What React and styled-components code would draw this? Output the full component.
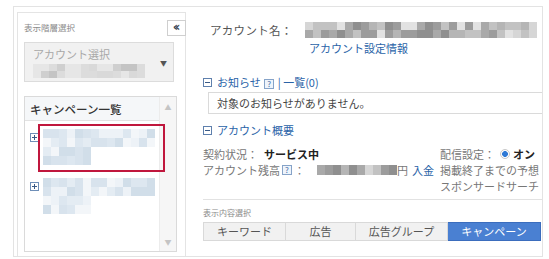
import styled, { createGlobalStyle } from "styled-components";

const GlobalStyle = createGlobalStyle`
  html, body {
    margin: 0;
    padding: 0;
    background: #fff;
  }
  body {
    font-family: "Noto Sans CJK JP", "Noto Sans", "Liberation Sans", sans-serif;
    font-size: 11px;
    color: #555;
  }
`;

const Page = styled.div`
  padding: 6px 0 0 13px;
`;

const Frame = styled.div`
  width: 530px;
  height: 251px;
  box-sizing: border-box;
  border: 1px solid #e3e3e3;
  display: flex;
  overflow: hidden;
`;

/* ---------- sidebar ---------- */

const Sidebar = styled.div`
  position: relative;
  margin: 5px 0 0 3px;
  width: 169px;
  flex-shrink: 0;
  box-sizing: border-box;
  border: 1px solid #e4e4e4;
  border-bottom: none;
  padding: 8px 0 0 6px;
`;

const SmallLabel = styled.div`
  font-size: 8.5px;
  line-height: 12px;
  color: #8a8a8a;
`;

const CollapseButton = styled.div`
  position: absolute;
  top: 7px;
  right: -1px;
  width: 19px;
  height: 16px;
  box-sizing: border-box;
  border: 1px solid #cfcfcf;
  background: #fff;
  color: #3c4656;
  font-family: "DejaVu Sans", sans-serif;
  font-size: 13px;
  font-weight: 700;
  line-height: 12px;
  text-align: center;
  letter-spacing: -3px;
  text-indent: -3px;
`;

const SelectBox = styled.div`
  margin-top: 9px;
  width: 150px;
  height: 40px;
  box-sizing: border-box;
  border: 1px solid #dcdcdc;
  background: #f1f1f1;
  padding: 4px 0 0 8px;
  position: relative;
`;

const SelectPlaceholder = styled.div`
  color: #a8a8a8;
  font-size: 11px;
  line-height: 14px;
  margin-bottom: 3px;
`;

const SelectArrow = styled.span`
  position: absolute;
  right: 6px;
  top: 15px;
  font-size: 7px;
  color: #555;
`;

const ListBox = styled.div`
  margin-top: 14px;
  width: 153px;
  height: 156px;
  box-sizing: border-box;
  border: 1px solid #dadada;
  display: flex;
`;

const ListMain = styled.div`
  position: relative;
  flex: 1;
  display: flex;
  flex-direction: column;
`;

const ListHeader = styled.div`
  height: 24px;
  box-sizing: border-box;
  background: #f5f7f9;
  border-bottom: 1px solid #e2e2e2;
  padding-left: 5px;
  font-size: 11.5px;
  line-height: 24px;
  color: #333;
  font-weight: 500;
`;

const ListItem = styled.div`
  display: flex;
  gap: 4px;
  padding: ${p => p.$first ? "8px" : "13px"} 0 0 5px;
`;

const Scrollbar = styled.div`
  width: 16px;
  background: #f6f6f6;
  border-left: 1px solid #ececec;
  display: flex;
  flex-direction: column;
  justify-content: space-between;
  align-items: center;
  padding: 5px 0 4px;
  color: #c4c4c4;
  font-size: 7px;
`;

const Highlight = styled.div`
  position: absolute;
  left: 13px;
  top: 27px;
  width: 127px;
  height: 48px;
  box-sizing: border-box;
  border: 2px solid #c0173d;
`;

const PlusIcon = styled.span`
  width: 9px;
  height: 9px;
  margin-top: 4px;
  flex-shrink: 0;
  box-sizing: border-box;
  border: 1px solid #6f8fb8;
  background: #fff;
  position: relative;
  &::before, &::after {
    content: "";
    position: absolute;
    background: #3a5a86;
  }
  &::before { left: 1px; right: 1px; top: 3px; height: 1px; }
  &::after { top: 1px; bottom: 1px; left: 3px; width: 1px; }
`;

/* ---------- main ---------- */

const Main = styled.div`
  flex: 1;
  min-width: 0;
  overflow: hidden;
  padding: 15px 0 0 17px;
`;

const NameRow = styled.div`
  display: flex;
  align-items: center;
  padding-left: 7px;
  height: 16px;
  white-space: nowrap;
`;

const NameLabel = styled.span`
  width: 95px;
  font-size: 11.5px;
  color: #555;
  letter-spacing: 0.3px;
`;

const SettingsLink = styled.a`
  display: block;
  margin: 2px 0 0 106px;
  color: #2a63a8;
  line-height: 16px;
  text-decoration: none;
  white-space: nowrap;
`;

const SectionHead = styled.div`
  display: flex;
  align-items: center;
  gap: 5px;
  margin-top: ${p => p.$mt}px;
  line-height: 16px;
  color: #2a63a8;
  white-space: nowrap;
`;

const MinusIcon = styled.span`
  width: 9px;
  height: 9px;
  box-sizing: border-box;
  border: 1px solid #5f80ad;
  position: relative;
  &::before {
    content: "";
    position: absolute;
    left: 1px;
    right: 1px;
    top: 3px;
    height: 1px;
    background: #3a5a86;
  }
`;

const Help = styled.span`
  display: inline-block;
  width: 10px;
  height: 10px;
  box-sizing: border-box;
  border: 1px solid #86a3c8;
  background: #eef4fb;
  color: #3c6aa6;
  font-size: 8px;
  line-height: 8px;
  text-align: center;
  margin: 0 ${p => p.$gap ?? 2}px;
  vertical-align: middle;
`;

const NoticeBox = styled.div`
  margin: 2px 0 0 5px;
  width: 360px;
  height: 22px;
  box-sizing: border-box;
  border: 1px solid #dadada;
  padding-left: 8px;
  line-height: 20px;
  color: #444;
  white-space: nowrap;
`;

const InfoGrid = styled.div`
  margin-top: 8px;
  display: grid;
  grid-template-columns: 237px 110px;
  line-height: 16px;
  white-space: nowrap;
`;

const InfoCol = styled.div`
  display: flex;
  flex-direction: column;
  color: #777;
`;

const Strong = styled.span`
  color: #222;
  font-weight: 700;
  margin-left: ${p => p.$ml ?? 6}px;
`;

const Line = styled.span`
  display: flex;
  align-items: center;
`;

const BlueText = styled.span`
  color: #2a63a8;
  margin-left: 4px;
`;

const BalanceBlur = styled.span`
  display: flex;
  margin-left: 12px;
`;

const Radio = styled.span`
  width: 10px;
  height: 10px;
  box-sizing: border-box;
  border-radius: 50%;
  border: 1px solid #c8c8c8;
  background: radial-gradient(circle, #2f7ad6 0 2.6px, #fff 3.2px);
  margin: 0 3px 0 5px;
`;

const Divider = styled.div`
  margin-top: 5px;
  height: 1px;
  width: 360px;
  background: #e2e2e2;
`;

const ContentLabel = styled(SmallLabel)`
  margin-top: 7px;
  font-size: 8px;
`;

const Tabs = styled.div`
  display: flex;
  margin-top: 3px;
`;

const Tab = styled.div`
  width: ${p => p.$w}px;
  height: 19px;
  box-sizing: border-box;
  border: 1px solid ${p => p.$active ? "#3b6dbd" : "#d9d9d9"};
  border-left-width: ${p => p.$first ? 1 : 0}px;
  background: ${p => p.$active ? "#4a80d2" : "#f1f1f1"};
  color: ${p => p.$active ? "#fff" : "#555"};
  text-align: center;
  line-height: 17px;
  flex-shrink: 0;
`;

/* ---------- pixelated (blurred) content ---------- */

const Mosaic = styled.div`
  display: grid;
  grid-template-columns: repeat(${p => p.$cols}, ${p => p.$cw}px);
  grid-auto-rows: ${p => p.$ch}px;
  flex-shrink: 0;
`;

const Cell = styled.span`
  background: ${p => p.$c};
`;

function shades(count, palette, seed) {
  const out = [];
  let s = seed;
  for (let i = 0; i < count; i++) {
    s = (s * 9301 + 49297) % 233280;
    out.push(palette[Math.floor((s / 233280) * palette.length)]);
  }
  return out;
}

function Pixels({ cols, rows, cw, ch, palette, seed, blank = [] }) {
  const colors = shades(cols * rows, palette, seed);
  return (
    <Mosaic $cols={cols} $cw={cw} $ch={ch}>
      {colors.map((c, i) => (
        <Cell key={i} $c={blank.includes(i) ? "transparent" : c} />
      ))}
    </Mosaic>
  );
}

const grays = ["#d6d6d6", "#c2c2c2", "#a9a9a9", "#8f8f8f", "#e2e2e2", "#b5b5b5", "#9c9c9c"];
const lightGrays = ["#dcdcdc", "#cfcfcf", "#e6e6e6", "#c4c4c4", "#d9d9d9"];
const blues = ["#e4ecf3", "#d8e3ed", "#edf2f7", "#d1dee9", "#f3f6f9", "#dde7f0"];
const itemBlank = [34, 35, 36, 37, 38, 39, 40, 41, 48, 49, 50, 51, 52, 53, 54, 55];

export default function App() {
  return (
    <Page>
      <GlobalStyle />
      <Frame>
        <Sidebar>
          <SmallLabel>表示階層選択</SmallLabel>
          <CollapseButton>‹‹</CollapseButton>
          <SelectBox>
            <SelectPlaceholder>アカウント選択</SelectPlaceholder>
            <Pixels cols={14} rows={2} cw={8} ch={7} palette={lightGrays} seed={7} />
            <SelectArrow>▼</SelectArrow>
          </SelectBox>
          <ListBox>
            <ListMain>
              <ListHeader>キャンペーン一覧</ListHeader>
              <ListItem $first>
                <PlusIcon />
                <Pixels cols={14} rows={4} cw={8} ch={9} palette={blues} seed={3} blank={itemBlank} />
              </ListItem>
              <ListItem>
                <PlusIcon />
                <Pixels cols={14} rows={4} cw={8} ch={9} palette={blues} seed={11} blank={itemBlank} />
              </ListItem>
              <Highlight />
            </ListMain>
            <Scrollbar>
              <span>▲</span>
              <span>▼</span>
            </Scrollbar>
          </ListBox>
        </Sidebar>

        <Main>
          <NameRow>
            <NameLabel>アカウント名：</NameLabel>
            <Pixels cols={29} rows={2} cw={8} ch={8} palette={grays} seed={21} />
          </NameRow>
          <SettingsLink href="#">アカウント設定情報</SettingsLink>

          <SectionHead $mt={18}>
            <MinusIcon />
            <span>お知らせ <Help $gap={1}>?</Help> | 一覧(0)</span>
          </SectionHead>
          <NoticeBox>対象のお知らせがありません。</NoticeBox>

          <SectionHead $mt={8}>
            <MinusIcon />
            <span>アカウント概要</span>
          </SectionHead>

          <InfoGrid>
            <InfoCol>
              <Line>契約状況：<Strong>サービス中</Strong></Line>
              <Line>
                アカウント残高<Help>?</Help>：
                <BalanceBlur>
                  <Pixels cols={10} rows={1} cw={8} ch={10} palette={grays} seed={5} />
                </BalanceBlur>
                <span>円</span>
                <BlueText>入金</BlueText>
              </Line>
            </InfoCol>
            <InfoCol>
              <Line>配信設定：<Radio /><Strong $ml={0}>オン</Strong></Line>
              <Line>掲載終了までの予想</Line>
              <Line>スポンサードサーチ</Line>
            </InfoCol>
          </InfoGrid>

          <Divider />
          <ContentLabel>表示内容選択</ContentLabel>
          <Tabs>
            <Tab $w={83} $first>キーワード</Tab>
            <Tab $w={70}>広告</Tab>
            <Tab $w={92}>広告グループ</Tab>
            <Tab $w={93} $active>キャンペーン</Tab>
          </Tabs>
        </Main>
      </Frame>
    </Page>
  );
}
